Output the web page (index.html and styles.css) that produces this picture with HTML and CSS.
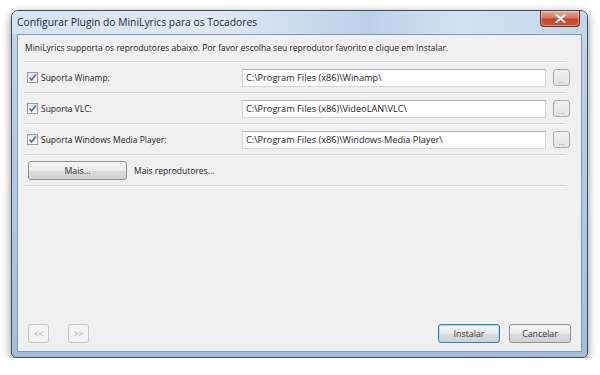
FILE: index.html
```html
<!DOCTYPE html>
<html lang="pt">
<head>
  <meta charset="UTF-8">
  <title>Configurar Plugin do MiniLyrics para os Tocadores</title>
  <link rel="stylesheet" href="styles.css">
</head>
<body>
  <div class="window">
    <!-- barra de título -->
    <div class="titlebar">
      <span class="title">Configurar Plugin do MiniLyrics para os Tocadores</span>
      <button class="close-btn">
        <svg width="11" height="9" viewBox="0 0 11 9"><path d="M1.5 1 L9.5 8 M9.5 1 L1.5 8" stroke="#fff" stroke-width="2.2" stroke-linecap="round"/></svg>
      </button>
    </div>

    <div class="client">
      <p class="intro">MiniLyrics supporta os reprodutores abaixo. Por favor escolha seu reprodutor favorito e clique em Instalar.</p>
      <div class="sep"></div>

      <div class="row">
        <label class="check"><span class="box"><svg width="9" height="9" viewBox="0 0 9 9"><path d="M1.5 4.5 L3.6 7 L7.8 1.5" fill="none" stroke="#4a6aa8" stroke-width="1.5"/></svg></span>Suporta Winamp:</label>
        <div class="path">C:\Program Files (x86)\Winamp\</div>
        <button class="browse">...</button>
      </div>
      <div class="sep"></div>

      <div class="row">
        <label class="check"><span class="box"><svg width="9" height="9" viewBox="0 0 9 9"><path d="M1.5 4.5 L3.6 7 L7.8 1.5" fill="none" stroke="#4a6aa8" stroke-width="1.5"/></svg></span>Suporta VLC:</label>
        <div class="path">C:\Program Files (x86)\VideoLAN\VLC\</div>
        <button class="browse">...</button>
      </div>
      <div class="sep"></div>

      <div class="row">
        <label class="check"><span class="box"><svg width="9" height="9" viewBox="0 0 9 9"><path d="M1.5 4.5 L3.6 7 L7.8 1.5" fill="none" stroke="#4a6aa8" stroke-width="1.5"/></svg></span>Suporta Windows Media Player:</label>
        <div class="path">C:\Program Files (x86)\Windows Media Player\</div>
        <button class="browse">...</button>
      </div>
      <div class="sep"></div>

      <div class="row">
        <button class="btn mais">Mais...</button>
        <span class="more-text">Mais reprodutores...</span>
      </div>
      <div class="sep"></div>

      <div class="footer">
        <button class="btn nav" disabled>&lt;&lt;</button>
        <button class="btn nav" disabled>&gt;&gt;</button>
        <div class="spacer"></div>
        <button class="btn action default">Instalar</button>
        <button class="btn action">Cancelar</button>
      </div>
    </div>
  </div>
</body>
</html>
```

FILE: styles.css
```css
/* ——— base ——— */
body {
  margin:0; padding:10px 0 0 11px;
  background:#fff;
  font-family:"Open Sans","Noto Sans",Arial,sans-serif;
  font-size:8.5px; color:#222;
}
button { font-family:inherit; font-size:inherit; }

/* ——— janela ——— */
.window {
  width:575px; height:346px;
  border:1px solid #3e4c5c; border-radius:7px 7px 5px 5px;
  background:linear-gradient(to bottom, #c9dbee 0, #bcd2ea 40px, #a3bedc 100%);
  box-shadow:0 3px 10px rgba(0,0,0,0.45);
  display:flex; flex-direction:column;
}
.titlebar {
  height:23px; display:flex; align-items:flex-start;
  padding-left:5px;
  background:linear-gradient(to right, #d6e4f3 0, #dfe9f5 35%, #bcd1e9 62%, #d3e2f2 78%, #c2d6ec 100%);
  border-radius:6px 6px 0 0;
}
.title {
  flex:1; line-height:23px;
  font-size:10.3px; color:#1e2a38;
}
.close-btn {
  width:40px; height:16px; margin-right:7px;
  border:1px solid #6a2a1c; border-top:none; border-radius:0 0 4px 4px;
  background:linear-gradient(to bottom, #e9a898 0, #d8765f 45%, #c2432b 55%, #d4573b 100%);
  display:flex; align-items:center; justify-content:center; padding:0;
  box-shadow:inset 0 0 0 1px rgba(255,255,255,0.35);
}

/* ——— área cliente ——— */
.client {
  flex:1; margin:0 5px 5px 5px;
  border:1px solid #8098b4;
  background:#f0f0f0;
  padding:5px 15px 8px 7px;
  display:flex; flex-direction:column;
}
.intro { margin:0 0 6px; line-height:15px; }
.sep { border-top:1px solid #d5d5d5; border-bottom:1px solid #fff; }

.row { height:29px; display:flex; align-items:center; }
.check { flex:0 0 217px; display:flex; align-items:center; }
.box {
  width:9px; height:9px; margin:0 3px 0 2px;
  border:1px solid #9a9a9a; background:linear-gradient(#e6e6e6,#fbfbfb);
  display:flex; align-items:center; justify-content:center;
}
.path {
  flex:1; height:16px; line-height:16px; padding-left:3px;
  background:#fff; border:1px solid #d3d6dc; border-top-color:#b5b7bd;
  font-size:9.2px;
}
.browse {
  width:17px; height:17px; margin:0 -4px 0 7px; padding:0;
  border:1px solid #acacac; border-radius:3px;
  background:linear-gradient(#f4f4f4,#e2e2e2);
  color:#9a9a9a; font-size:8px; line-height:20px;
}

/* ——— botões ——— */
.btn {
  height:19px; padding:0;
  border:1px solid #8e8f8f; border-radius:3px;
  background:linear-gradient(to bottom, #f6f6f6 0, #ebebeb 50%, #dcdcdc 51%, #d2d2d2 100%);
  color:#333; font-size:8.8px;
}
.mais { width:99px; margin-left:3px; }
.more-text { margin-left:7px; }

.footer { margin-top:auto; display:flex; align-items:center; }
.nav {
  width:21px; margin-left:3px;
  border-color:#c6c6c6; background:#f4f4f4; color:#a8a8a8;
  font-size:8.5px;
}
.nav + .nav { margin-left:19px; }
.spacer { flex:1; }
.action { width:62px; }
.action + .action { margin-left:9px; margin-right:-5px; }
.default {
  border-color:#3c7fb1;
  box-shadow:inset 0 0 0 1px #a5dcf5;
}
```
